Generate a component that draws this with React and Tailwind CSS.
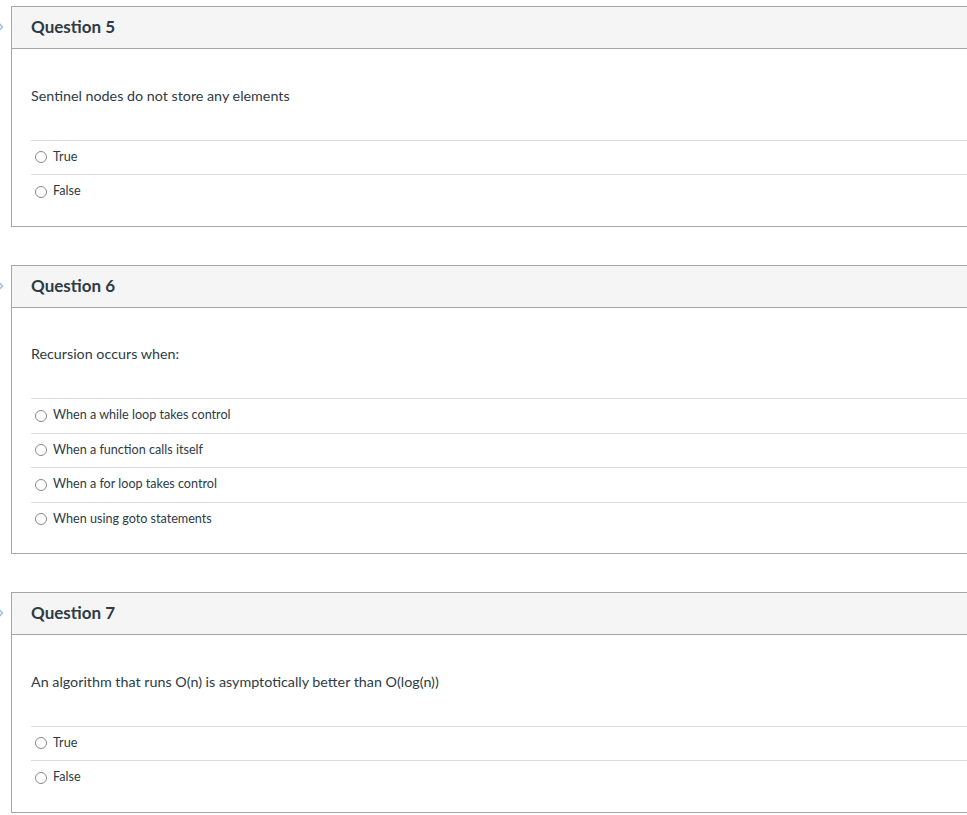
import React from "react";

const questions = [
  {
    n: 5,
    text: "Sentinel nodes do not store any elements",
    answers: ["True", "False"],
  },
  {
    n: 6,
    text: "Recursion occurs when:",
    answers: [
      "When a while loop takes control",
      "When a function calls itself",
      "When a for loop takes control",
      "When using goto statements",
    ],
  },
  {
    n: 7,
    text: "An algorithm that runs O(n) is asymptotically better than O(log(n))",
    answers: ["True", "False"],
  },
];

function Chevron() {
  return (
    <svg
      width="10"
      height="12"
      viewBox="0 0 10 12"
      className="absolute left-[-4px] top-[15px]"
      fill="none"
    >
      <path d="M2 1.5 L6.5 6 L2 10.5" stroke="#a9c3dc" strokeWidth="1.6" />
    </svg>
  );
}

function Question({ q }) {
  return (
    <div className="relative pl-[11px]">
      <Chevron />
      <div className="w-[1000px] border border-[#a6a6a6] bg-white">
        <div className="h-[42px] bg-[#f5f5f5] border-b border-[#a6a6a6] flex items-center px-[19px] pb-[2px]">
          <span className="text-[17px] font-bold text-[#2d3b45] leading-none">
            Question {q.n}
          </span>
        </div>
        <div className="px-[19px] pb-[17px]">
          <div className="pt-[36.5px] pb-[34px] text-[14.3px] leading-[20px] text-[#2d3b45]">
            {q.text}
          </div>
          <div>
            {q.answers.map((a) => (
              <div
                key={a}
                className="h-[34.5px] border-t border-[#dcdcdc] flex items-center pl-[4px]"
              >
                <span className="w-[12px] h-[12px] rounded-full border border-[#8a8a8a] bg-white mr-[6px] shrink-0" />
                <span className="text-[12.6px] text-[#2d3b45] leading-none">{a}</span>
              </div>
            ))}
          </div>
        </div>
      </div>
    </div>
  );
}

export default function App() {
  return (
    <div
      className="w-[967px] h-[815px] overflow-hidden bg-white pt-[6px] flex flex-col gap-[38px]"
      style={{ fontFamily: "Lato, 'Liberation Sans', sans-serif" }}
    >
      {questions.map((q) => (
        <Question key={q.n} q={q} />
      ))}
    </div>
  );
}
